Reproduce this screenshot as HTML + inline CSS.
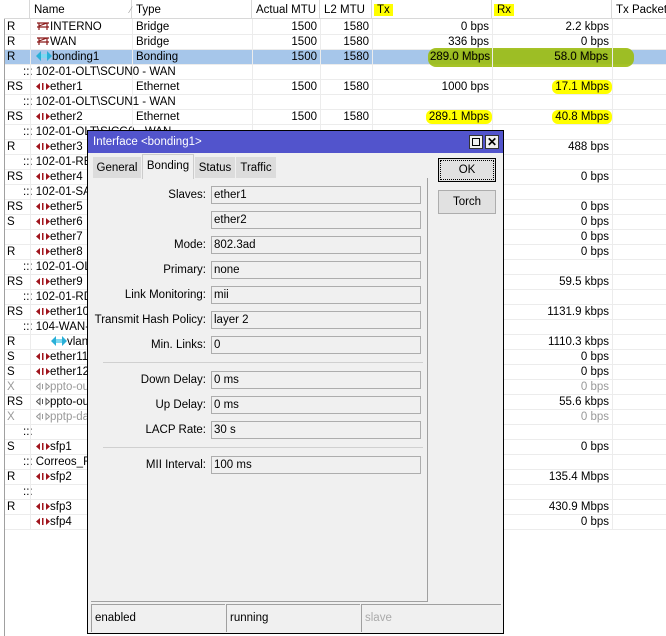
<!DOCTYPE html>
<html><head><meta charset="utf-8"><style>
*{margin:0;padding:0;box-sizing:border-box}
body{width:666px;height:636px;background:#fff;font-family:"Liberation Sans",sans-serif;font-size:11.5px;color:#000;position:relative;overflow:hidden}
.a{position:absolute;white-space:nowrap}
.hdr{position:absolute;top:0;left:4px;right:0;height:19px;background:#fff;border-bottom:1px solid #d8d8d8}
.hc{position:absolute;top:0;height:19px;line-height:20px;padding-left:4px;border-right:1px solid #d8d8d8}
.row{position:absolute;left:5px;right:0;height:15px;border-bottom:1px solid #ececec}
.c{position:absolute;top:0;height:15px;line-height:15px}
.r{text-align:right;padding-right:3px}
.vl{position:absolute;top:19px;width:1px;background:#ececec;height:511px}
.g{color:#999}
.dlg{position:absolute;left:87px;top:130px;width:417px;height:504px;background:#f0f0f0;border:1px solid #000}
.tb{position:absolute;left:0;top:0;right:0;height:22px;background:#5254cc;color:#fff;line-height:22px;padding-left:5px}
.fld{position:absolute;left:120px;width:210px;height:18px;border:1px solid #adadad;background:#f0f0f0;line-height:16px;padding-left:2px}
.lab{position:absolute;left:0;width:115px;text-align:right;line-height:18px}
.sep{position:absolute;left:12px;width:320px;height:1px;background:#d0d0d0}
.btn{position:absolute;left:350px;width:58px;height:24px;border:1px solid #adadad;background:#e1e1e1;text-align:center;line-height:22px}
.sb{position:absolute;top:473px;height:28px;border-left:1px solid #a0a0a0;border-top:1px solid #a0a0a0;line-height:26px;padding-left:3px}
</style></head><body>
<div class="a" style="left:4px;top:0;width:1px;height:636px;background:#a0a0a0"></div>
<div class="hdr">
<div class="hc" style="left:0;width:26px"></div>
<div class="hc" style="left:26px;width:102px">Name<span style="position:absolute;left:100px;color:#999;font-size:9px">⁄</span></div>
<div class="hc" style="left:128px;width:120px">Type</div>
<div class="hc" style="left:248px;width:68px">Actual MTU</div>
<div class="hc" style="left:316px;width:52px">L2 MTU</div>
<div class="hc" style="left:368px;width:120px"><span style="background:#ffff00;padding:0 3px;margin-left:-2px">Tx</span></div>
<div class="hc" style="left:488px;width:120px"><span style="background:#ffff00;padding:0 3px;margin-left:-2px">Rx</span></div>
<div class="hc" style="left:608px;width:60px;border:none">Tx Packet</div>
</div>
<div id="rows"></div>
<script>
const E='<svg width="14" height="9" viewBox="0 0 14 9" style="vertical-align:-1px"><path d="M0 4.5L4 1V8Z M14 4.5L10 1V8Z" fill="#a0141c"/><rect x="6" y="1" width="1.5" height="7" fill="#a0141c"/></svg>';
const EG='<svg width="14" height="9" viewBox="0 0 14 9" style="vertical-align:-1px"><path d="M0.5 4.5L4 1.5V7.5Z M13.5 4.5L10 1.5V7.5Z" fill="none" stroke="#999"/><rect x="6" y="2" width="1" height="5" fill="#999"/></svg>';
const EB='<svg width="14" height="9" viewBox="0 0 14 9" style="vertical-align:-1px"><path d="M0.5 4.5L4 1.5V7.5Z M13.5 4.5L10 1.5V7.5Z" fill="none" stroke="#555"/><rect x="6" y="2" width="1" height="5" fill="#555"/></svg>';
const B='<svg width="14" height="10" viewBox="0 0 14 10" style="vertical-align:-1px"><path d="M1 2H13M1 6H13M3 2V9M11 2V9M3 5L11 2" stroke="#8b1a1a" stroke-width="1.2" fill="none"/></svg>';
const BO='<svg width="16" height="10" viewBox="0 0 16 10" style="vertical-align:-1px"><path d="M0 5L5 0V10Z M16 5L11 0V10Z" fill="#2ab0d8"/><path d="M5 3H11V7H5Z" fill="#7fd8f0"/></svg>';
const R=[
['R',B,'INTERNO','Bridge','1500','1580','0 bps','2.2 kbps'],
['R',B,'WAN','Bridge','1500','1580','336 bps','0 bps'],
['R',BO,'bonding1','Bonding','1500','1580','289.0 Mbps','58.0 Mbps','sel'],
['c','102-01-OLT\\SCUN0 - WAN'],
['RS',E,'ether1','Ethernet','1500','1580','1000 bps','17.1 Mbps','', 'rx'],
['c','102-01-OLT\\SCUN1 - WAN'],
['RS',E,'ether2','Ethernet','1500','1580','289.1 Mbps','40.8 Mbps','', 'both'],
['c','102-01-OLT\\SICG0 - WAN'],
['R',E,'ether3','','','','','488 bps'],
['c','102-01-REC'],
['RS',E,'ether4','','','','','0 bps'],
['c','102-01-SAI'],
['RS',E,'ether5','','','','','0 bps'],
['S',E,'ether6','','','','','0 bps'],
['',E,'ether7','','','','','0 bps'],
['R',E,'ether8','','','','','0 bps'],
['c','102-01-OLT'],
['RS',E,'ether9','','','','','59.5 kbps'],
['c','102-01-RDI'],
['RS',E,'ether10','','','','','1131.9 kbps'],
['c','104-WAN-C'],
['R',BO,'vlan','','','','','1110.3 kbps','','','ind'],
['S',E,'ether11','','','','','0 bps'],
['S',E,'ether12','','','','','0 bps'],
['X',EG,'ppto-ou','','','','','0 bps','','','g'],
['RS',EB,'ppto-ou','','','','','55.6 kbps'],
['X',EG,'pptp-da','','','','','0 bps','','','g'],
['c',''],
['S',E,'sfp1','','','','','0 bps'],
['c','Correos_Re'],
['R',E,'sfp2','','','','','135.4 Mbps'],
['c',''],
['R',E,'sfp3','','','','','430.9 Mbps'],
['',E,'sfp4','','','','','0 bps']
];
let h='';
R.forEach((r,i)=>{const t=20+15*i;
if(r[0]=='c'){h+=`<div class="row" style="top:${t}px"><div class="c" style="left:18px">::: ${r[1]}</div></div>`;return;}
const sel=r[8]=='sel', g=r[10]=='g';
const hl='background:#ffff00;border-radius:6px;padding:1px 3px;margin-right:-3px';
let tx=r[6], rx=r[7];
if(r[9]=='both'){tx=`<span style="${hl}">${tx}</span>`;}
if(r[9]=='rx'||r[9]=='both'){rx=`<span style="${hl}">${rx}</span>`;}
h+=`<div class="row${g?' g':''}" style="top:${t}px;${sel?'background:#a6c6ea;':''}">
<div class="c" style="left:2px">${r[0]}</div>
<div class="c" style="left:${r[10]=='ind'?46:31}px">${r[1]}${r[2]}</div>
<div class="c" style="left:131px">${r[3]}</div>
<div class="c r" style="left:247px;width:68px">${r[4]}</div>
<div class="c r" style="left:315px;width:52px">${r[5]}</div>
<div class="c r" style="left:367px;width:120px">${tx}</div>
<div class="c r" style="left:487px;width:120px">${rx}</div></div>`;
});
document.getElementById('rows').innerHTML=h;
</script>
<div class="a" style="left:428px;top:48px;width:206px;height:19px;background:#9cbc10;border-radius:8px;opacity:.9"></div>
<div class="a" style="left:430px;top:50px;width:58px;height:15px;line-height:15px;text-align:right">289.0 Mbps</div>
<div class="a" style="left:550px;top:50px;width:58px;height:15px;line-height:15px;text-align:right">58.0 Mbps</div>
<div class="vl" style="left:30px"></div><div class="vl" style="left:132px"></div><div class="vl" style="left:252px"></div><div class="vl" style="left:320px"></div><div class="vl" style="left:372px"></div><div class="vl" style="left:492px"></div><div class="vl" style="left:612px"></div>

<div class="dlg">
<div class="tb">Interface &lt;bonding1&gt;
<div class="a" style="left:381px;top:4px;width:14px;height:14px;background:#f0f0f0;border:1px solid #333"><div style="margin:2px;width:8px;height:8px;border:1px solid #000"></div></div>
<div class="a" style="left:397px;top:4px;width:14px;height:14px;background:#f0f0f0;border:1px solid #333;color:#000;font-size:12px;line-height:12px;text-align:center;font-weight:bold">✕</div>
</div>
<div class="a" style="left:5px;top:26px;width:48px;height:21px;background:#dcdcdc;line-height:22px;text-align:center">General</div>
<div class="a" style="left:54px;top:23px;width:52px;height:25px;background:#f0f0f0;border:1px solid #ccc;border-bottom:none;line-height:22px;text-align:center">Bonding</div>
<div class="a" style="left:107px;top:26px;width:40px;height:21px;background:#dcdcdc;line-height:22px;text-align:center">Status</div>
<div class="a" style="left:148px;top:26px;width:40px;height:21px;background:#dcdcdc;line-height:22px;text-align:center">Traffic</div>
<div class="a" style="left:3px;top:47px;width:337px;height:424px;border-right:1px solid #a0a0a0;border-bottom:1px solid #a0a0a0">
<div class="lab" style="top:8px">Slaves:</div><div class="fld" style="top:8px">ether1</div>
<div class="fld" style="top:33px">ether2</div>
<div class="lab" style="top:58px">Mode:</div><div class="fld" style="top:58px">802.3ad</div>
<div class="lab" style="top:83px">Primary:</div><div class="fld" style="top:83px">none</div>
<div class="lab" style="top:108px">Link Monitoring:</div><div class="fld" style="top:108px">mii</div>
<div class="lab" style="top:133px">Transmit Hash Policy:</div><div class="fld" style="top:133px">layer 2</div>
<div class="lab" style="top:158px">Min. Links:</div><div class="fld" style="top:158px">0</div>
<div class="sep" style="top:184px"></div>
<div class="lab" style="top:193px">Down Delay:</div><div class="fld" style="top:193px">0 ms</div>
<div class="lab" style="top:218px">Up Delay:</div><div class="fld" style="top:218px">0 ms</div>
<div class="lab" style="top:243px">LACP Rate:</div><div class="fld" style="top:243px">30 s</div>
<div class="sep" style="top:269px"></div>
<div class="lab" style="top:278px">MII Interval:</div><div class="fld" style="top:278px">100 ms</div>
</div>
<div class="btn" style="top:27px;border:1px solid #000;outline:1px dotted #000;outline-offset:-3px">OK</div>
<div class="btn" style="top:59px">Torch</div>
<div class="sb" style="left:3px;width:134px">enabled</div>
<div class="sb" style="left:138px;width:134px">running</div>
<div class="sb" style="left:273px;width:140px;color:#aaa">slave</div>
</div>
</body></html>
